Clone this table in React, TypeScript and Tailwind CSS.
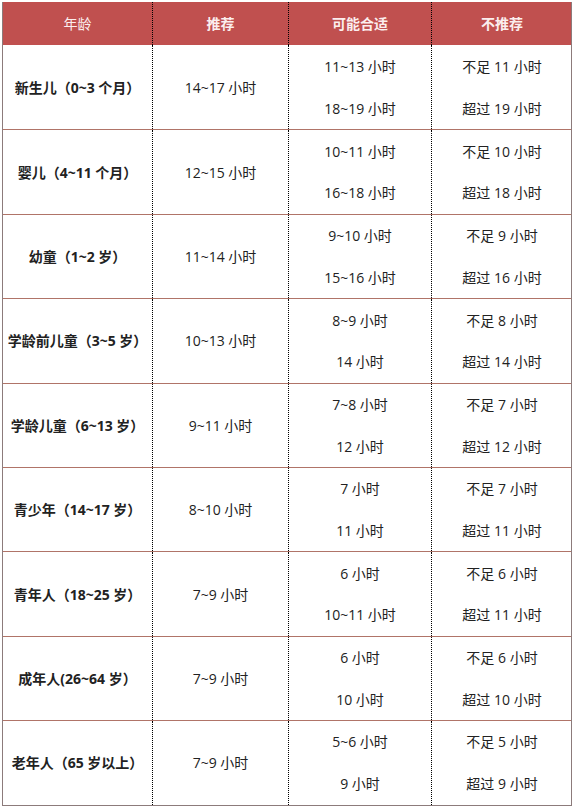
const rows: { age: string; rec: string; ok: [string, string]; no: [string, string] }[] = [
  { age: '新生儿（0~3 个月）', rec: '14~17 小时', ok: ['11~13 小时', '18~19 小时'], no: ['不足 11 小时', '超过 19 小时'] },
  { age: '婴儿（4~11 个月）', rec: '12~15 小时', ok: ['10~11 小时', '16~18 小时'], no: ['不足 10 小时', '超过 18 小时'] },
  { age: '幼童（1~2 岁）', rec: '11~14 小时', ok: ['9~10 小时', '15~16 小时'], no: ['不足 9 小时', '超过 16 小时'] },
  { age: '学龄前儿童（3~5 岁）', rec: '10~13 小时', ok: ['8~9 小时', '14 小时'], no: ['不足 8 小时', '超过 14 小时'] },
  { age: '学龄儿童（6~13 岁）', rec: '9~11 小时', ok: ['7~8 小时', '12 小时'], no: ['不足 7 小时', '超过 12 小时'] },
  { age: '青少年（14~17 岁）', rec: '8~10 小时', ok: ['7 小时', '11 小时'], no: ['不足 7 小时', '超过 11 小时'] },
  { age: '青年人（18~25 岁）', rec: '7~9 小时', ok: ['6 小时', '10~11 小时'], no: ['不足 6 小时', '超过 11 小时'] },
  { age: '成年人(26~64 岁）', rec: '7~9 小时', ok: ['6 小时', '10 小时'], no: ['不足 6 小时', '超过 10 小时'] },
  { age: '老年人（65 岁以上）', rec: '7~9 小时', ok: ['5~6 小时', '9 小时'], no: ['不足 5 小时', '超过 9 小时'] },
];

const grid = 'grid grid-cols-[149px_136px_143px_141px]';
const sep = 'border-l border-dotted border-black';

function Pair({ items }: { items: [string, string] }) {
  return (
    <div className={`flex flex-col ${sep}`}>
      {items.map((t, i) => (
        <div key={i} className="flex-1 flex items-center justify-center">
          {t}
        </div>
      ))}
    </div>
  );
}

export default function App() {
  return (
    <div className="bg-white w-[574px] h-[809px] pt-[2px] pl-[2px]" style={{ fontFamily: '"Open Sans", "Noto Sans CJK SC", sans-serif' }}>
      <div className="w-[570px] border-x border-b border-[#8c7b7b]">
        <div className={`${grid} h-[43px] bg-[#c0504f] text-[14px] text-[#fbeeee]`}>
          <div className="flex items-center justify-center">年龄</div>
          <div className={`flex items-center justify-center font-bold ${sep}`}>推荐</div>
          <div className={`flex items-center justify-center font-bold ${sep}`}>可能合适</div>
          <div className={`flex items-center justify-center font-bold ${sep}`}>不推荐</div>
        </div>
        {rows.map((r, i) => (
          <div
            key={i}
            className={`${grid} h-[84.4px] text-[14px] text-[#222] ${i > 0 ? 'border-t border-[#b07468]' : ''}`}
          >
            <div className="flex items-center justify-center font-bold whitespace-nowrap">{r.age}</div>
            <div className={`flex items-center justify-center ${sep}`}>{r.rec}</div>
            <Pair items={r.ok} />
            <Pair items={r.no} />
          </div>
        ))}
      </div>
    </div>
  );
}
